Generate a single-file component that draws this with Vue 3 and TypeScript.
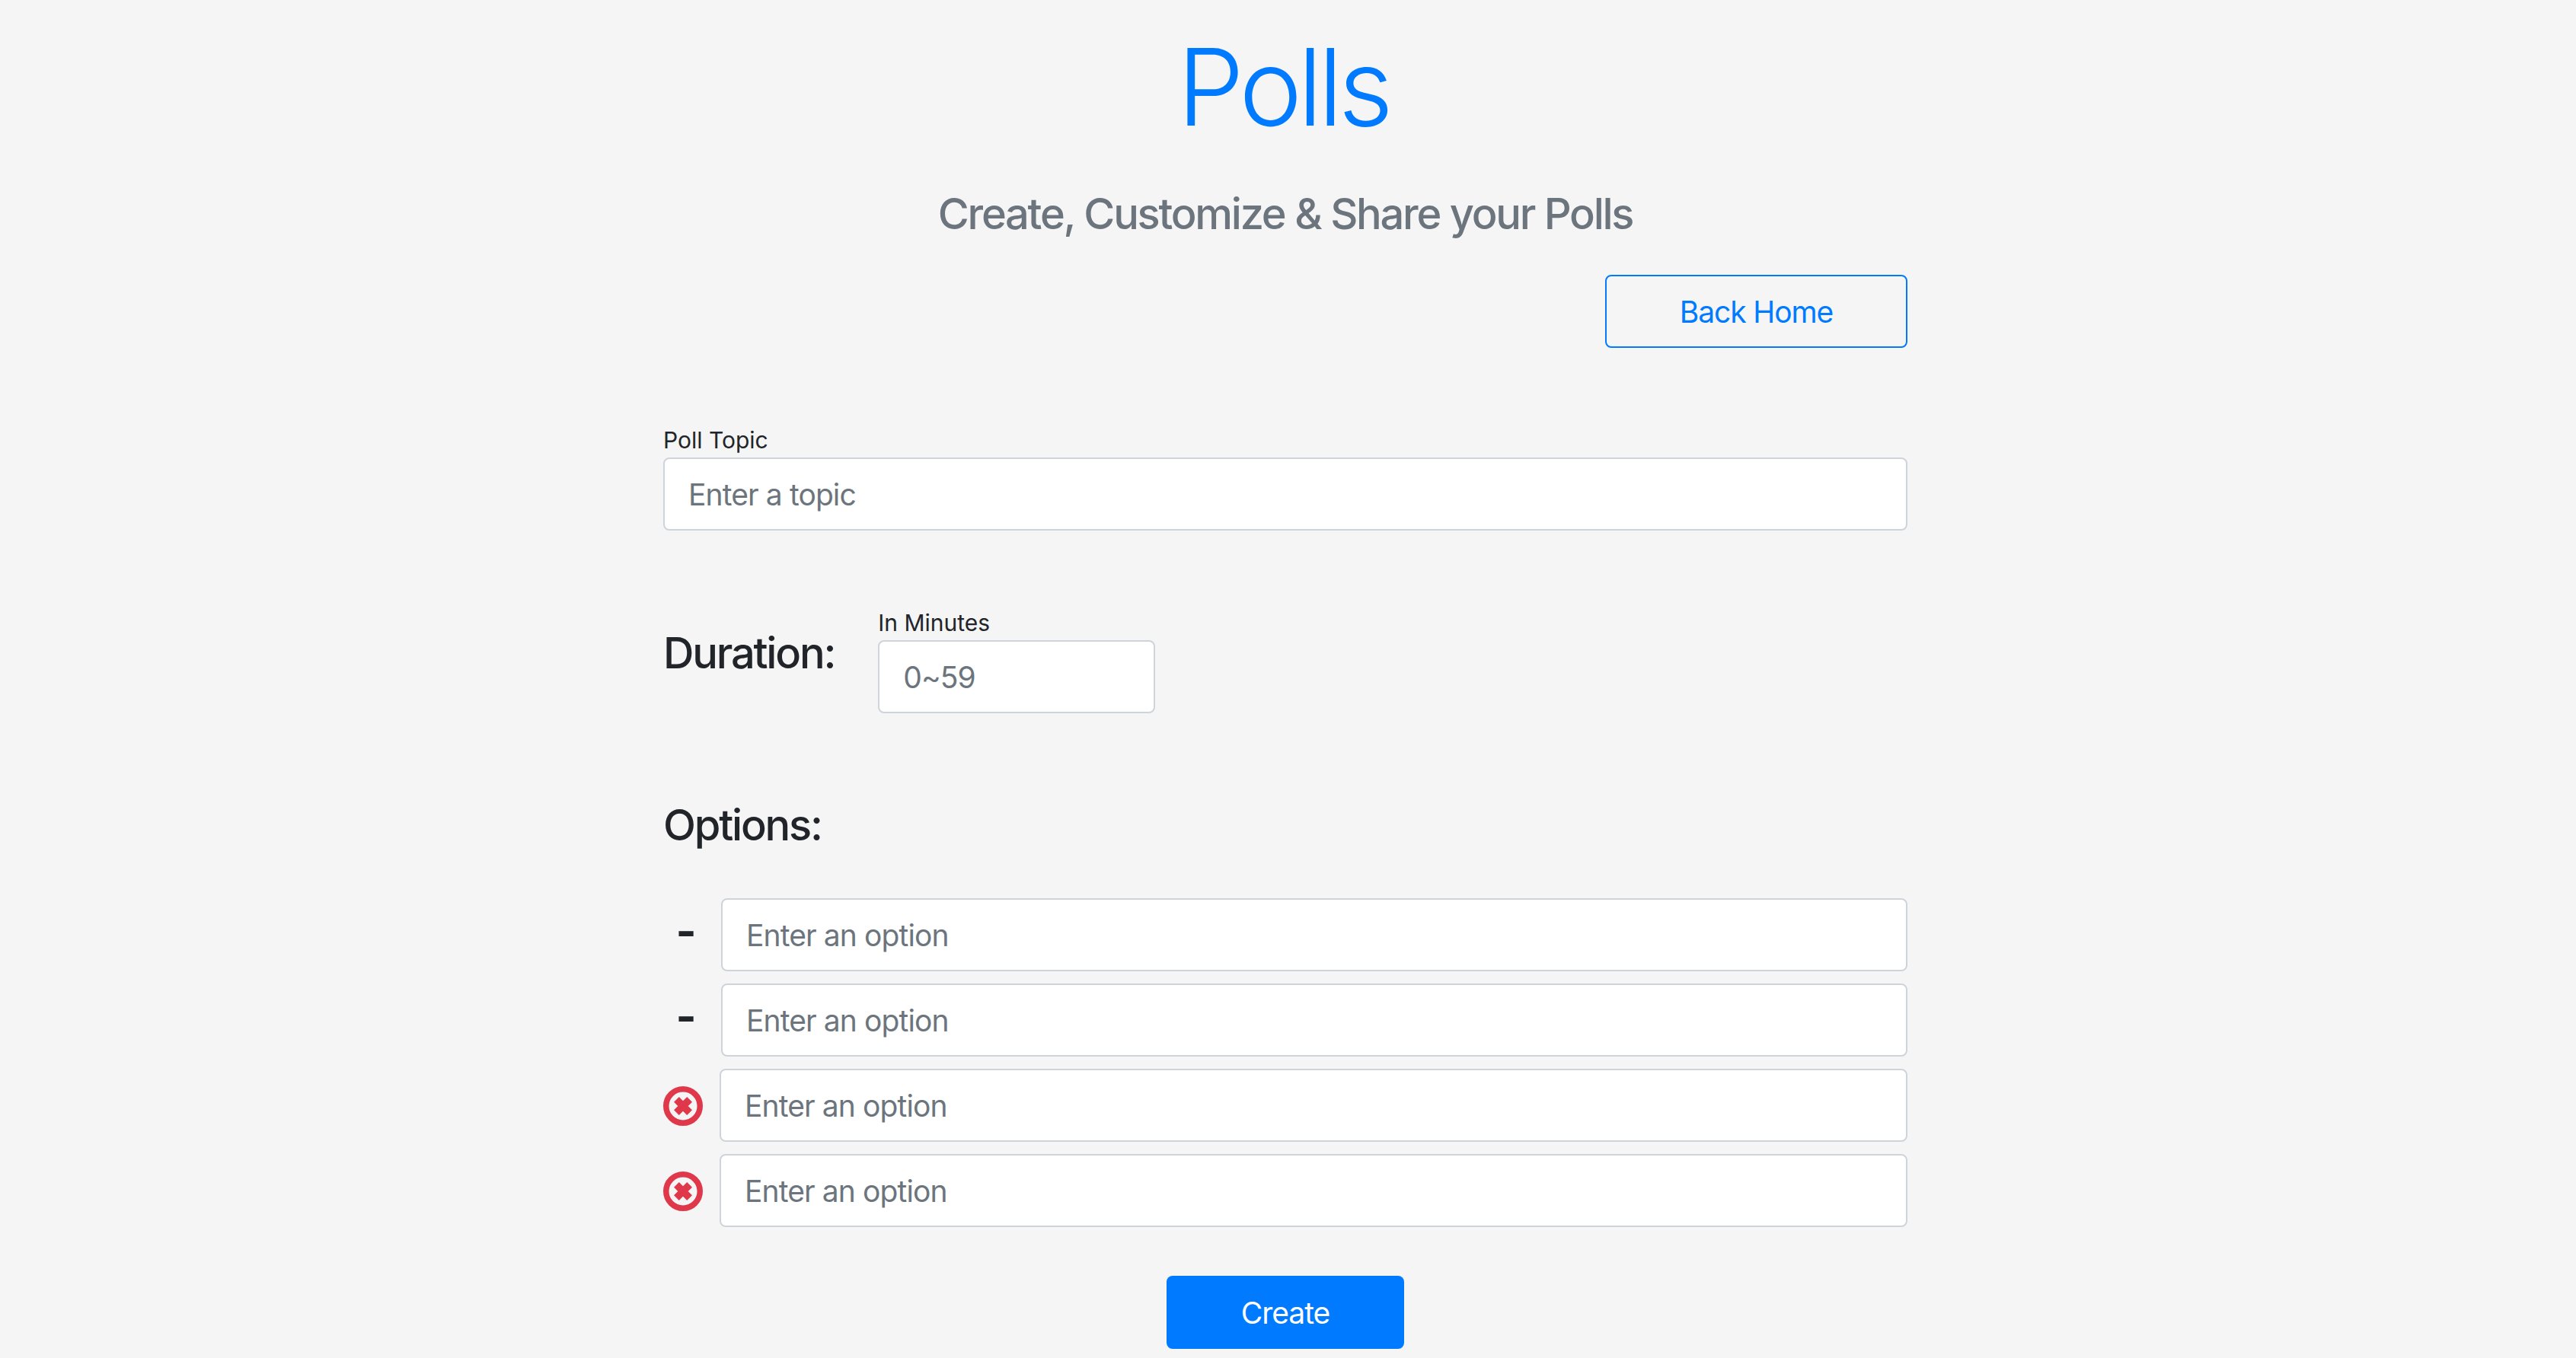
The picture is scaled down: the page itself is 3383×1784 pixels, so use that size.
<script setup lang="ts">
const rows = [
  { removable: false },
  { removable: false },
  { removable: true },
  { removable: true },
]
</script>

<template>
  <main class="page">
    <h1 class="title">Polls</h1>
    <p class="subtitle">Create, Customize &amp; Share your Polls</p>
    <div class="form">
      <div class="back-row"><button class="btn-outline">Back Home</button></div>
      <label class="lbl topic-lbl">Poll Topic</label>
      <input class="field" placeholder="Enter a topic" />
      <div class="duration">
        <h4 class="head">Duration:</h4>
        <div class="minutes">
          <label class="lbl">In Minutes</label>
          <input class="field" placeholder="0~59" />
        </div>
      </div>
      <h4 class="head options">Options:</h4>
      <div class="rows">
        <div v-for="(r, i) in rows" :key="i" class="row">
          <svg v-if="r.removable" class="x" viewBox="0 0 52 52">
            <circle cx="26" cy="26" r="22.25" fill="none" stroke="#e0384b" stroke-width="7.5" />
            <path d="M17.4 17.4L34.6 34.6M34.6 17.4L17.4 34.6" stroke="#e0384b" stroke-width="9.5" stroke-linecap="butt" fill="none" />
          </svg>
          <span v-else class="dash">-</span>
          <input class="field" placeholder="Enter an option" />
        </div>
      </div>
      <div class="create-row"><button class="btn-primary">Create</button></div>
    </div>
  </main>
</template>

<style scoped>
.page {
  min-height: 1784px;
  box-sizing: border-box;
  padding-right: 7px;
  background: #f5f5f5;
  font-family: Inter, "Liberation Sans", sans-serif;
  color: #212529;
  display: flex;
  flex-direction: column;
  align-items: center;
  overflow: hidden;
}
.title {
  margin: 30px 0 0;
  padding-right: 6px;
  font-size: 140px;
  line-height: 168px;
  font-weight: 300;
  letter-spacing: -6px;
  color: #007bff;
}
.subtitle {
  margin: 50px 0 0;
  font-size: 56px;
  line-height: 67px;
  font-weight: 550;
  letter-spacing: -2.25px;
  color: #6c757d;
}
.form {
  width: 1634px;
  display: flex;
  flex-direction: column;
}
.back-row { display: flex; justify-content: flex-end; margin-top: 46px; }
.btn-outline {
  width: 397px;
  height: 96px;
  border: 2px solid #007bff;
  border-radius: 8px;
  background: transparent;
  color: #007bff;
  font: 400 39px Inter, sans-serif;
  letter-spacing: -1.1px;
}
.lbl { font-size: 30px; line-height: 36px; color: #212529; display: block; }
.topic-lbl { margin-top: 103px; margin-bottom: 5px; }
.field {
  box-sizing: border-box;
  width: 100%;
  height: 96px;
  border: 2px solid #ced4da;
  border-radius: 8px;
  background: #fff;
  padding: 1px 31px 0;
  font: 400 39px Inter, sans-serif;
  letter-spacing: -0.9px;
  color: #495057;
}
.field::placeholder { color: #6c757d; opacity: 1; }
.duration { display: flex; gap: 57px; margin-top: 103px; }
.head { margin: 0; font-size: 56px; line-height: 67px; font-weight: 550; letter-spacing: -2.2px; color: #212529; }
.duration .head { margin-top: 25px; }
.minutes { width: 364px; }
.minutes .lbl { margin-bottom: 5px; }
.options { margin-top: 114px; }
.rows { display: flex; flex-direction: column; gap: 16px; margin-top: 62px; }
.row { display: flex; align-items: center; }
.row .field { flex: 1; }
.dash { width: 76px; flex: none; font-size: 58px; font-weight: 700; text-align: center; padding-right: 16px; box-sizing: border-box; color: #212529; line-height: 60px; margin-top: -10px; }
.x { width: 52px; height: 52px; margin: 1px 22px 0 0; flex: none; }
.create-row { display: flex; justify-content: center; margin-top: 64px; }
.btn-primary {
  width: 312px;
  height: 96px;
  border: none;
  border-radius: 8px;
  background: #007bff;
  color: #fff;
  font: 400 39px Inter, sans-serif;
  letter-spacing: -1px;
}
</style>

<style>
html, body { margin: 0; background: #f5f5f5; }
</style>
